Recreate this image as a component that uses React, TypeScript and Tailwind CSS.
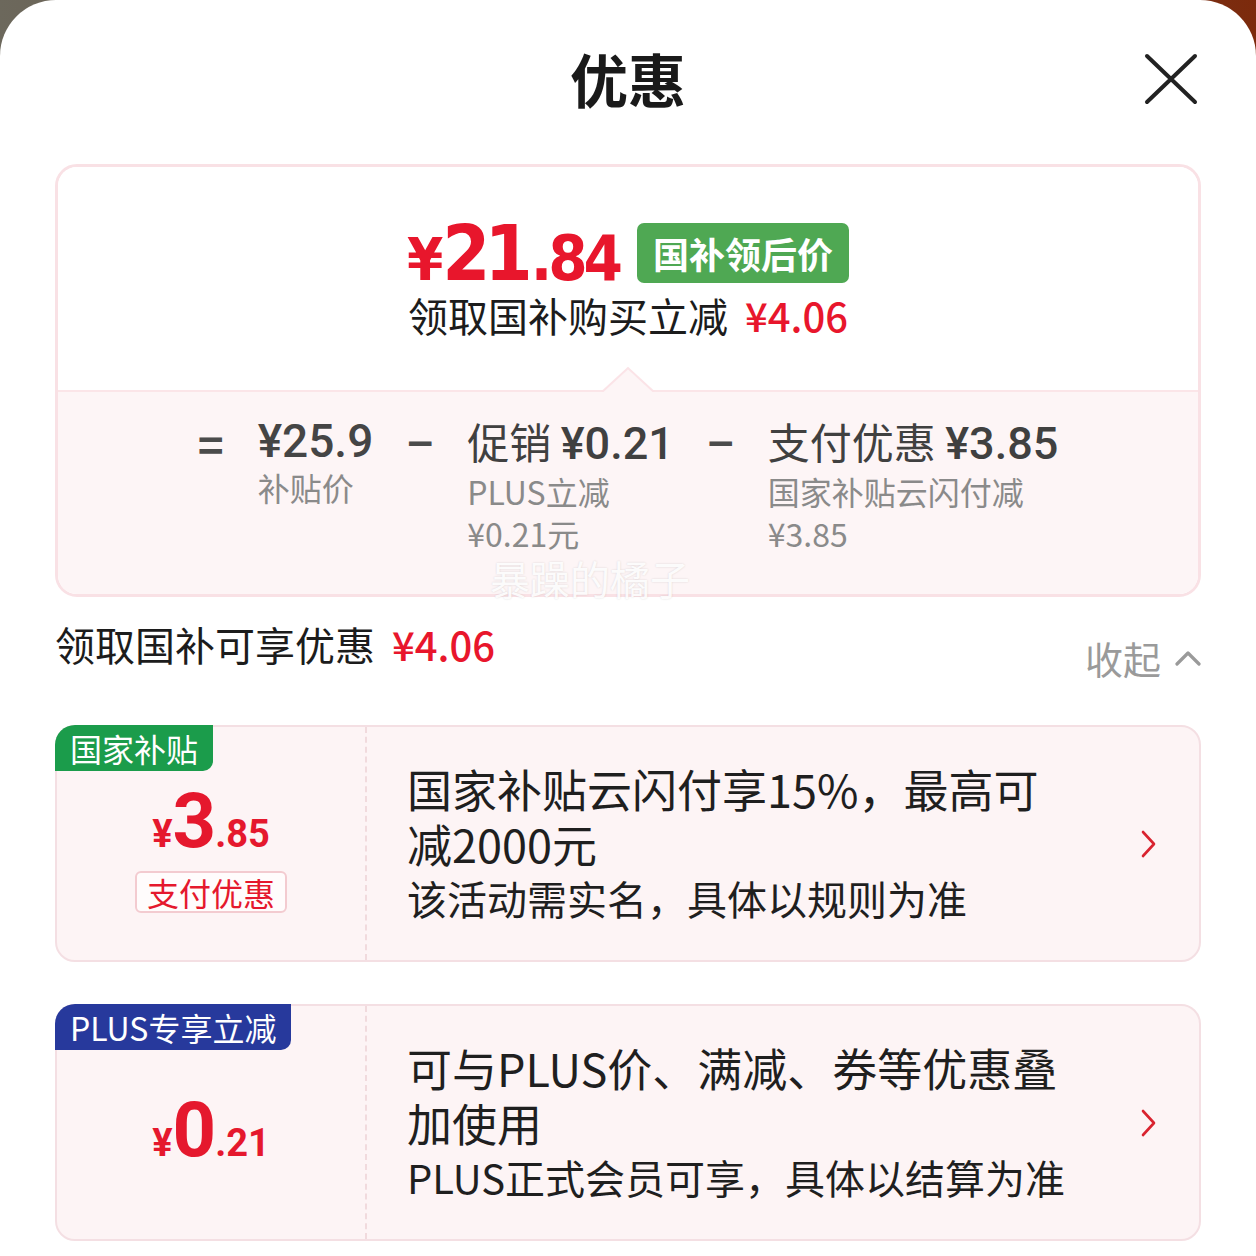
import React from 'react';

const cjk = "font-['Noto_Sans_CJK_SC','Noto_Sans',sans-serif]";
const num = "font-['Roboto','Noto_Sans_CJK_SC',sans-serif]";
const narrow = "font-['Liberation_Sans_Narrow','DejaVu_Sans_Condensed','Roboto',sans-serif]";

function Chevron() {
  return (
    <svg width="18" height="28" viewBox="0 0 18 28" className="shrink-0">
      <path d="M3 2 L14 14 L3 26" fill="none" stroke="#d9232f" strokeWidth="2.6" strokeLinecap="round" strokeLinejoin="round" />
    </svg>
  );
}

function CouponCard({
  tag,
  tagClass,
  big,
  small,
  label,
  lines,
  sub,
}: {
  tag: string;
  tagClass: string;
  big: string;
  small: string;
  label?: string;
  lines: string[];
  sub: string;
}) {
  return (
    <div className="relative mx-[55px] h-[237px] flex rounded-[20px] border-2 border-[#f4dfe3] bg-[#fdf4f5]">
      <div
        className={`absolute left-[-2px] top-[-2px] h-[46px] px-[15px] flex items-center rounded-tl-[20px] rounded-br-[10px] text-[32px] leading-none text-white ${cjk} ${tagClass}`}
      >
        {tag}
      </div>
      <div className="w-[310px] shrink-0 border-r-2 border-dashed border-[#f1dadd] flex flex-col items-center justify-center pt-[14px]">
        <div className={`flex items-baseline text-[#e5182d] font-bold ${num}`}>
          <span className="text-[38px] leading-none">¥</span>
          <span className="text-[76px] leading-[64px] tracking-[-1px]">{big}</span>
          <span className="text-[38px] leading-none">{small}</span>
        </div>
        {label && (
          <div className={`mt-[18px] h-[42px] px-[10px] flex items-center rounded-[6px] border-2 border-[#f3cbd0] bg-white/70 text-[32px] leading-none text-[#e5182d] ${cjk}`}>
            {label}
          </div>
        )}
      </div>
      <div className={`flex-1 pl-[40px] flex flex-col justify-center text-[#1f1f1f] ${cjk}`}>
        {lines.map((l) => (
          <div key={l} className="text-[45px] leading-[55px]">{l}</div>
        ))}
        <div className="text-[40px] leading-[55px]">{sub}</div>
      </div>
      <div className="w-[90px] flex items-center justify-center pr-[10px]">
        <Chevron />
      </div>
    </div>
  );
}

export default function App() {
  return (
    <div className="h-[1256px] w-[1256px] overflow-hidden bg-gradient-to-r from-[#6c685c] via-[#6a4a36] to-[#7c2a0c]">
      <div className={`h-full bg-white rounded-t-[56px] relative ${cjk}`}>
        {/* header */}
        <div className="pt-[46px] flex justify-center">
          <h1 className="text-[58px] leading-[64px] font-bold text-[#1a1a1a]">优惠</h1>
        </div>
        <svg className="absolute right-[58px] top-[53px]" width="54" height="52" viewBox="0 0 54 52">
          <path d="M3 3 L51 49 M51 3 L3 49" stroke="#222" strokeWidth="4" strokeLinecap="round" />
        </svg>

        {/* summary card */}
        <div className="relative mx-[55px] mt-[54px] rounded-[22px] border-[3px] border-[#f9e1e5] overflow-hidden">
          <div className="h-[223px] bg-white flex flex-col items-center pt-[55px]">
            <div className="flex items-center h-[62px]">
              <div className={`flex items-baseline text-[#e8162c] font-bold ${narrow}`}>
                <span className="text-[58px] leading-none tracking-[-3px]">¥</span>
                <span className="text-[77px] leading-none ml-[2px] tracking-[-6px]">21</span>
                <span className="text-[63px] leading-none ml-[4px] tracking-[-4px]">.84</span>
              </div>
              <div className="ml-[18px] h-[60px] px-[16px] flex items-center rounded-[7px] bg-[#4fa853] text-white text-[36px] font-bold leading-none">
                国补领后价
              </div>
            </div>
            <div className="mt-[6px] flex items-center text-[40px] leading-[50px] text-[#1c1c1c]">
              <span>领取国补购买立减</span>
              <span className="ml-[17px] text-[#e8162c] font-medium">¥4.06</span>
            </div>
          </div>
          <div className="relative h-[204px] bg-[#fdf5f6] border-t-2 border-[#fbe5e8]">
            <svg className="absolute left-1/2 -translate-x-1/2 top-[-26px]" width="56" height="26" viewBox="0 0 56 26">
              <path d="M2 26 L28 2 L54 26" fill="#fdf5f6" stroke="#fbe3e7" strokeWidth="2" />
            </svg>
            <div className="flex justify-center items-start gap-[34px] pt-[24px]">
              <span className="text-[#4b4b4b] text-[44px] font-bold leading-[50px] pt-[2px]">=</span>
              <div className="flex flex-col">
                <span className={`text-[46px] leading-[50px] font-medium text-[#454545] ${num}`}>¥25.9</span>
                <span className="text-[32px] leading-[42px] text-[#8a8a8a]">补贴价</span>
              </div>
              <span className="text-[#4b4b4b] text-[44px] font-bold leading-[50px]">−</span>
              <div className="flex flex-col">
                <span className="text-[42px] leading-[50px] text-[#404040]">
                  促销 <span className={`font-medium text-[45px] ${num}`}>¥0.21</span>
                </span>
                <span className="text-[32px] leading-[44px] text-[#8a8a8a]">PLUS立减</span>
                <span className="text-[32px] leading-[40px] text-[#8a8a8a]">¥0.21元</span>
              </div>
              <span className="text-[#4b4b4b] text-[44px] font-bold leading-[50px]">−</span>
              <div className="flex flex-col">
                <span className="text-[42px] leading-[50px] text-[#404040]">
                  支付优惠 <span className={`font-medium text-[45px] ${num}`}>¥3.85</span>
                </span>
                <span className="text-[32px] leading-[44px] text-[#8a8a8a]">国家补贴云闪付减</span>
                <span className="text-[32px] leading-[40px] text-[#8a8a8a]">¥3.85</span>
              </div>
            </div>
          </div>
        </div>
        <span className="absolute left-[490px] top-[554px] text-[40px] leading-[48px] text-white/90 [text-shadow:0_0_2px_rgba(0,0,0,0.15)]">
          暴躁的橘子
        </span>

        {/* section heading */}
        <div className="mt-[25px] px-[55px] flex justify-between items-start">
          <div className="flex items-center text-[40px] leading-[44px] text-[#1c1c1c]">
            <span>领取国补可享优惠</span>
            <span className="ml-[17px] text-[#e8162c] font-medium">¥4.06</span>
          </div>
          <div className="mt-[14px] flex items-center text-[38px] leading-[44px] text-[#9a9a9a]">
            <span>收起</span>
            <svg className="ml-[14px]" width="26" height="18" viewBox="0 0 26 18">
              <path d="M2 15 L13 4 L24 15" fill="none" stroke="#9a9a9a" strokeWidth="3.2" strokeLinecap="round" strokeLinejoin="round" />
            </svg>
          </div>
        </div>

        <div className="mt-[45px] flex flex-col gap-[42px]">
          <CouponCard
            tag="国家补贴"
            tagClass="bg-[#1b9c4b]"
            big="3"
            small=".85"
            label="支付优惠"
            lines={['国家补贴云闪付享15%，最高可', '减2000元']}
            sub="该活动需实名，具体以规则为准"
          />
          <CouponCard
            tag="PLUS专享立减"
            tagClass="bg-[#27399c]"
            big="0"
            small=".21"
            lines={['可与PLUS价、满减、券等优惠叠', '加使用']}
            sub="PLUS正式会员可享，具体以结算为准"
          />
        </div>
      </div>
    </div>
  );
}
